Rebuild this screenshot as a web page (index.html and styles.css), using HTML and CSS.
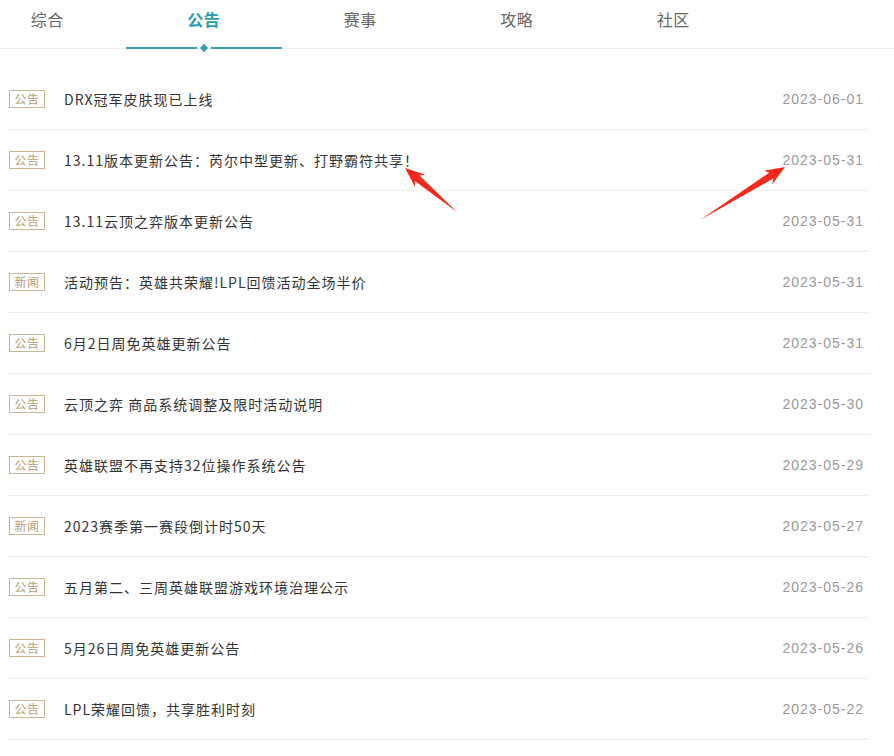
FILE: index.html
```html
<!DOCTYPE html>
<html lang="zh-CN">
<head>
<meta charset="utf-8">
<title>公告</title>
<link rel="stylesheet" href="styles.css">
</head>
<body>
<div class="page">
  <nav class="tabs">
    <div class="tab">综合</div>
    <div class="tab active"><span>公告</span></div>
    <div class="tab">赛事</div>
    <div class="tab">攻略</div>
    <div class="tab">社区</div>
  </nav>
  <ul class="list">
    <li class="row"><span class="tag">公告</span><span class="title">DRX冠军皮肤现已上线</span><span class="date">2023-06-01</span></li>
    <li class="row"><span class="tag">公告</span><span class="title">13.11版本更新公告：芮尔中型更新、打野霸符共享！</span><span class="date">2023-05-31</span></li>
    <li class="row"><span class="tag">公告</span><span class="title">13.11云顶之弈版本更新公告</span><span class="date">2023-05-31</span></li>
    <li class="row"><span class="tag">新闻</span><span class="title">活动预告：英雄共荣耀!LPL回馈活动全场半价</span><span class="date">2023-05-31</span></li>
    <li class="row"><span class="tag">公告</span><span class="title">6月2日周免英雄更新公告</span><span class="date">2023-05-31</span></li>
    <li class="row"><span class="tag">公告</span><span class="title">云顶之弈 商品系统调整及限时活动说明</span><span class="date">2023-05-30</span></li>
    <li class="row"><span class="tag">公告</span><span class="title">英雄联盟不再支持32位操作系统公告</span><span class="date">2023-05-29</span></li>
    <li class="row"><span class="tag">新闻</span><span class="title">2023赛季第一赛段倒计时50天</span><span class="date">2023-05-27</span></li>
    <li class="row"><span class="tag">公告</span><span class="title">五月第二、三周英雄联盟游戏环境治理公示</span><span class="date">2023-05-26</span></li>
    <li class="row"><span class="tag">公告</span><span class="title">5月26日周免英雄更新公告</span><span class="date">2023-05-26</span></li>
    <li class="row"><span class="tag">公告</span><span class="title">LPL荣耀回馈，共享胜利时刻</span><span class="date">2023-05-22</span></li>
  </ul>
  <svg class="arrows" width="894" height="756" viewBox="0 0 894 756" aria-hidden="true">
    <polygon fill="#f5281c" points="457,212 419.5,175.6 425.5,174.8 405,168 415.1,187 414.9,181"/>
    <polygon fill="#f5281c" points="700,220 773.3,178.5 772.2,184.4 785,167 763.8,170.8 769.5,172.5"/>
  </svg>
</div>
</body>
</html>
```
FILE: styles.css
```css
* { box-sizing: border-box; }
html, body {
  margin: 0;
  padding: 0;
  background: #fff;
}
body {
  font-family: "Microsoft YaHei", "Noto Sans CJK SC", "Liberation Sans", sans-serif;
  color: #333;
}
.page {
  position: relative;
  width: 894px;
  height: 756px;
  overflow: hidden;
}
.tabs {
  display: flex;
  height: 49px;
  border-bottom: 1px solid #ececec;
  margin-left: -31px;
}
.tab {
  position: relative;
  width: 156.5px;
  flex: none;
  text-align: center;
  font-size: 16px;
  line-height: 38px;
  color: #666;
  letter-spacing: 0.5px;
}
.tab.active {
  color: #2a9db0;
  font-weight: bold;
}
.tab.active::before {
  content: "";
  position: absolute;
  left: 0;
  right: 0;
  bottom: -1px;
  height: 2px;
  background: linear-gradient(to right, #3a9fa8 0, #3a9fa8 calc(50% - 7px), transparent calc(50% - 7px), transparent calc(50% + 7px), #3a9fa8 calc(50% + 7px), #3a9fa8 100%);
}
.tab.active::after {
  content: "";
  position: absolute;
  left: 50%;
  bottom: -3px;
  width: 6px;
  height: 6px;
  margin-left: -3px;
  background: #3a9fa8;
  transform: rotate(45deg);
}
.list {
  list-style: none;
  margin: 20px 0 0 8px;
  padding: 0;
  width: 862px;
}
.row {
  display: flex;
  align-items: center;
  height: 61px;
  border-bottom: 1px solid #ececec;
  padding: 0 6px 0 1px;
}
.tag {
  flex: none;
  width: 36px;
  height: 18px;
  border: 1px solid #c9b690;
  color: #b79d70;
  font-size: 12px;
  line-height: 16px;
  text-align: center;
  letter-spacing: 0.5px;
}
.title {
  flex: 1;
  margin-left: 19px;
  font-size: 14px;
  color: #333;
  letter-spacing: 1px;
  white-space: nowrap;
}
.date {
  flex: none;
  font-size: 14px;
  color: #999;
  letter-spacing: 1px;
  font-family: "Liberation Sans", "Noto Sans CJK SC", sans-serif;
}
.arrows {
  position: absolute;
  left: 0;
  top: 0;
  pointer-events: none;
}
```
